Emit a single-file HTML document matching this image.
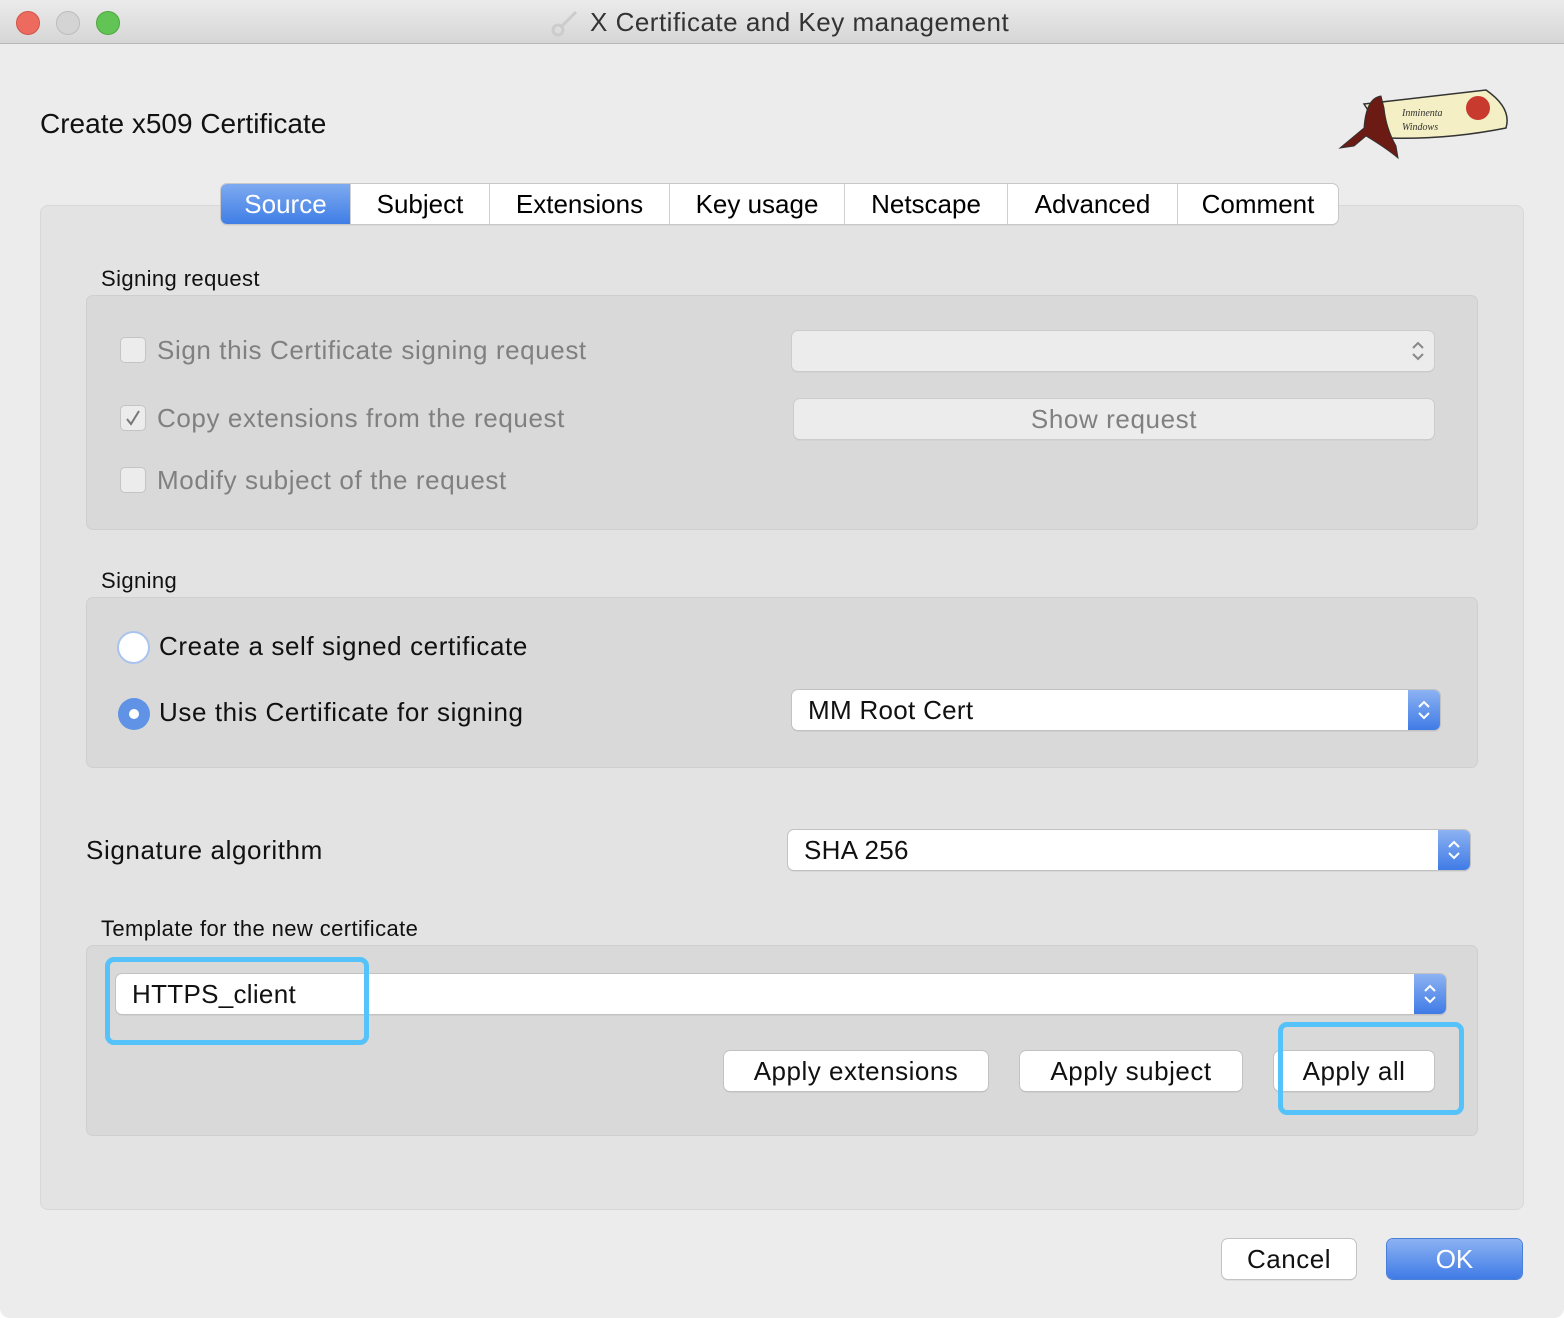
<!DOCTYPE html>
<html><head><style>
*{box-sizing:border-box;margin:0;padding:0}
body{width:1564px;height:1318px;background:#fff;font-family:"Liberation Sans",sans-serif;position:relative;overflow:hidden}
.win{position:absolute;left:0;top:0;width:1564px;height:1318px;background:#ececec;border-radius:0 0 10px 10px;overflow:hidden}
.tb{position:absolute;left:0;top:0;width:1564px;height:44px;background:linear-gradient(#ebebeb,#d6d6d6);border-bottom:1px solid #b8b8b8}
.dot{position:absolute;top:11px;width:24px;height:24px;border-radius:50%}
.a{position:absolute;white-space:nowrap}
.pane{position:absolute;left:40px;top:205px;width:1484px;height:1005px;background:#e3e3e3;border:1px solid #d8d8d8;border-radius:8px}
.grp{position:absolute;left:86px;width:1392px;background:#d9d9d9;border:1px solid #cfcfcf;border-radius:7px}
.tabs{position:absolute;left:221px;top:184px;height:40px;display:flex;background:#fff;border-radius:6px;box-shadow:0 0 0 1px #c8c8c8,0 1px 1px #aaa;font-size:26px}
.tabs div{height:40px;line-height:40px;text-align:center;border-left:1px solid #d0d0d0}
.cb{position:absolute;width:26px;height:26px;border:1px solid #c4c4c4;border-radius:5px;background:#ececec}
.lbl{font-size:22px;color:#111;letter-spacing:0.4px}
.dis{font-size:26px;color:#808080;letter-spacing:0.6px}
.t26{font-size:26px;color:#111;letter-spacing:0.6px}
.btn{position:absolute;height:40px;background:#fff;border-radius:6px;box-shadow:0 0 0 1px #c2c2c2,0 1px 1px #999;font-size:26px;text-align:center;line-height:40px;color:#111}
.combo{position:absolute;height:40px;background:#fff;border-radius:6px;box-shadow:0 0 0 1px #c2c2c2,0 1px 1px #999;font-size:26px;line-height:40px;padding-left:16px;color:#111;letter-spacing:0.3px}
.arr{position:absolute;right:0;top:0;width:32px;height:40px;background:linear-gradient(#8cb2f2,#3f7be6);border-radius:0 6px 6px 0}
.arr svg,.chev{position:absolute;left:8px;top:8px}
.hl{position:absolute;border:5px solid #56c2fa;border-radius:9px}
</style></head><body><div class="win">
<div class="tb">
<div class="dot" style="left:16px;background:#ec6a5e;border:1px solid #d25347"></div>
<div class="dot" style="left:56px;background:#d4d4d4;border:1px solid #bcbcbc"></div>
<div class="dot" style="left:96px;background:#61c454;border:1px solid #4fa73f"></div>
<svg class="a" style="left:550px;top:8px" width="30" height="30" viewBox="0 0 30 30"><circle cx="8" cy="22" r="5" fill="none" stroke="#ccc" stroke-width="3"/><path d="M12 18 L26 4" stroke="#ccc" stroke-width="3"/></svg>
<div class="a" style="left:590px;top:7px;font-size:26px;color:#333;letter-spacing:0.5px">X Certificate and Key management</div>
</div>
<div class="a" style="left:40px;top:108px;font-size:28px;color:#111">Create x509 Certificate</div>
<svg class="a" style="left:1336px;top:88px" width="176" height="76" viewBox="0 0 176 76">
<path d="M28 16 L150 2 Q176 20 170 40 Q110 52 50 50 Z" fill="#f4efc4" stroke="#333" stroke-width="1.5"/>
<circle cx="142" cy="20" r="12" fill="#c83a2e"/>
<path d="M45 8 Q30 10 28 40 L4 60 L18 58 L30 48 Q50 60 62 70 L60 58 Q50 40 48 20 Z" fill="#6b1a14" stroke="#333"/>
<text x="66" y="28" font-size="10" font-family="Liberation Serif" fill="#333" font-style="italic">Inminenta</text>
<text x="66" y="42" font-size="10" font-family="Liberation Serif" fill="#333" font-style="italic">Windows</text>
</svg>
<div class="pane"></div>
<div class="tabs">
<div style="width:129px;border:none;border-radius:6px 0 0 6px;background:linear-gradient(#7eaaf0,#3f7ee6);color:#fff">Source</div>
<div style="width:139px">Subject</div>
<div style="width:180px">Extensions</div>
<div style="width:175px">Key usage</div>
<div style="width:163px">Netscape</div>
<div style="width:170px">Advanced</div>
<div style="width:161px">Comment</div>
</div>
<div class="a lbl" style="left:101px;top:266px">Signing request</div>
<div class="grp" style="top:295px;height:235px"></div>
<div class="cb" style="left:120px;top:337px"></div>
<div class="a dis" style="left:157px;top:335px">Sign this Certificate signing request</div>
<div class="cb" style="left:120px;top:405px"><svg width="24" height="24" viewBox="0 0 24 24" style="position:absolute;left:0;top:0"><path d="M6 13 L10 18 L18 5" fill="none" stroke="#777" stroke-width="2"/></svg></div>
<div class="a dis" style="left:157px;top:403px">Copy extensions from the request</div>
<div class="cb" style="left:120px;top:467px"></div>
<div class="a dis" style="left:157px;top:465px">Modify subject of the request</div>
<div class="btn" style="left:792px;top:331px;width:642px;background:#ececec;box-shadow:0 0 0 1px #ccc,0 1px 1px #aaa"><svg class="chev" style="left:auto;right:8px" width="16" height="24" viewBox="0 0 16 24"><path d="M3 9 L8 4 L13 9 M3 15 L8 20 L13 15" fill="none" stroke="#888" stroke-width="2"/></svg></div>
<div class="btn" style="left:794px;top:399px;width:640px;background:#ececec;color:#808080;box-shadow:0 0 0 1px #ccc,0 1px 1px #aaa;letter-spacing:0.6px">Show request</div>
<div class="a lbl" style="left:101px;top:568px">Signing</div>
<div class="grp" style="top:597px;height:171px"></div>
<div class="a" style="left:117px;top:631px;width:33px;height:33px;border-radius:50%;background:#fff;border:2px solid #a9c3ef"></div>
<div class="a t26" style="left:159px;top:631px">Create a self signed certificate</div>
<div class="a" style="left:118px;top:698px;width:32px;height:32px;border-radius:50%;background:#6093e6"><div style="position:absolute;left:11px;top:11px;width:10px;height:10px;border-radius:50%;background:#fff"></div></div>
<div class="a t26" style="left:159px;top:697px">Use this Certificate for signing</div>
<div class="combo" style="left:792px;top:690px;width:648px">MM Root Cert<div class="arr"><svg width="16" height="24" viewBox="0 0 16 24"><path d="M3 9 L8 4 L13 9 M3 15 L8 20 L13 15" fill="none" stroke="#fff" stroke-width="2"/></svg></div></div>
<div class="a t26" style="left:86px;top:835px">Signature algorithm</div>
<div class="combo" style="left:788px;top:830px;width:682px">SHA 256<div class="arr"><svg width="16" height="24" viewBox="0 0 16 24"><path d="M3 9 L8 4 L13 9 M3 15 L8 20 L13 15" fill="none" stroke="#fff" stroke-width="2"/></svg></div></div>
<div class="a lbl" style="left:101px;top:916px">Template for the new certificate</div>
<div class="grp" style="top:945px;height:191px"></div>
<div class="combo" style="left:116px;top:974px;width:1330px">HTTPS_client<div class="arr"><svg width="16" height="24" viewBox="0 0 16 24"><path d="M3 9 L8 4 L13 9 M3 15 L8 20 L13 15" fill="none" stroke="#fff" stroke-width="2"/></svg></div></div>
<div class="btn" style="left:724px;top:1051px;width:264px;letter-spacing:0.5px">Apply extensions</div>
<div class="btn" style="left:1020px;top:1051px;width:222px;letter-spacing:0.5px">Apply subject</div>
<div class="btn" style="left:1274px;top:1051px;width:160px;letter-spacing:0.5px">Apply all</div>
<div class="hl" style="left:105px;top:957px;width:264px;height:88px"></div>
<div class="hl" style="left:1278px;top:1022px;width:186px;height:93px"></div>
<div class="btn" style="left:1222px;top:1239px;width:134px;letter-spacing:0.5px">Cancel</div>
<div class="btn" style="left:1387px;top:1239px;width:135px;background:linear-gradient(#8cb2f2,#3f7be6);color:#fff;box-shadow:0 0 0 1px #4a7fd8">OK</div>
</div></body></html>
